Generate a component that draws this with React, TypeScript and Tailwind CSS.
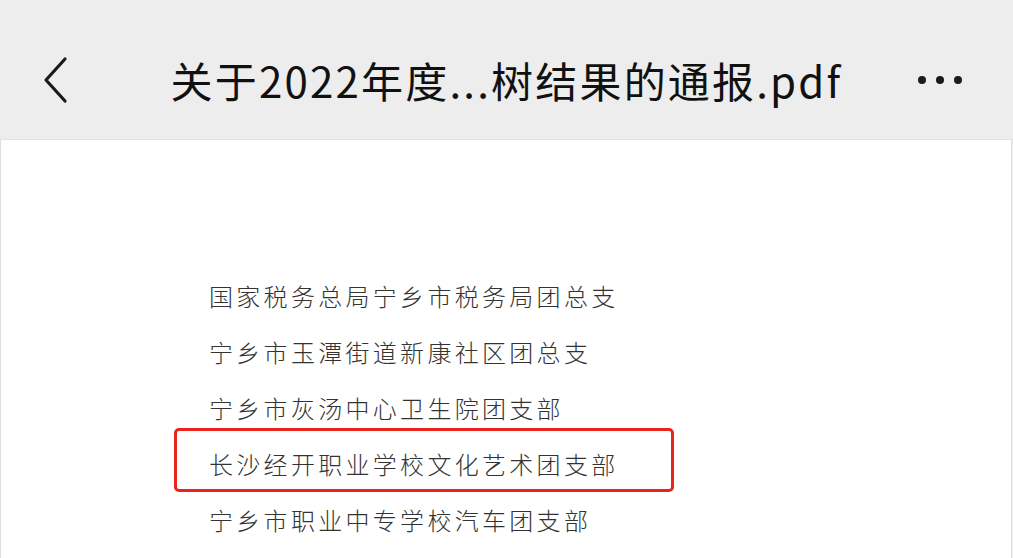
// @ts-nocheck
const lines = [
  "国家税务总局宁乡市税务局团总支",
  "宁乡市玉潭街道新康社区团总支",
  "宁乡市灰汤中心卫生院团支部",
  "长沙经开职业学校文化艺术团支部",
  "宁乡市职业中专学校汽车团支部",
]

function BackIcon() {
  return (
    <svg width="28" height="48" viewBox="0 0 28 48" fill="none">
      <path d="M22 3 L3 24 L22 45" stroke="#1a1a1a" strokeWidth="3.2" strokeLinecap="round" strokeLinejoin="round" />
    </svg>
  )
}

export default function App() {
  return (
    <div
      className="w-[1013px] h-[558px] overflow-hidden bg-[#ededed] flex flex-col"
      style={{ fontFamily: '"Noto Sans CJK SC", "Noto Sans", sans-serif' }}
    >
      {/* 顶部标题栏 */}
      <div className="h-[140px] shrink-0 grid grid-cols-[1fr_auto_1fr] items-center pt-[20px] border-b border-[#e3e3e3]">
        <div className="pl-[43px] flex items-center">
          <BackIcon />
        </div>
        <div className="text-[42px] font-normal text-[#111111] leading-none tracking-[2.2px]">
          关于2022年度...树结果的通报.pdf
        </div>
        <div className="flex justify-end items-center gap-[10px] pr-[51px]">
          <span className="w-[8px] h-[8px] rounded-full bg-[#1a1a1a]" />
          <span className="w-[8px] h-[8px] rounded-full bg-[#1a1a1a]" />
          <span className="w-[8px] h-[8px] rounded-full bg-[#1a1a1a]" />
        </div>
      </div>

      {/* PDF 页面 */}
      <div className="flex-1 bg-white border-x border-[#dedede] mr-[1px] pt-[128px] pl-[208px]">
        {lines.map((t, i) => (
          <div key={i} className="relative h-[56px] leading-[56px] text-[24px] font-light tracking-[3.3px] text-[#333333] whitespace-nowrap">
            {t}
            {i === 3 && (
              <div className="absolute left-[-35px] top-[-8px] w-[500px] h-[64px] border-[3px] border-[#e8241c] rounded-[5px]" />
            )}
          </div>
        ))}
      </div>
    </div>
  )
}
